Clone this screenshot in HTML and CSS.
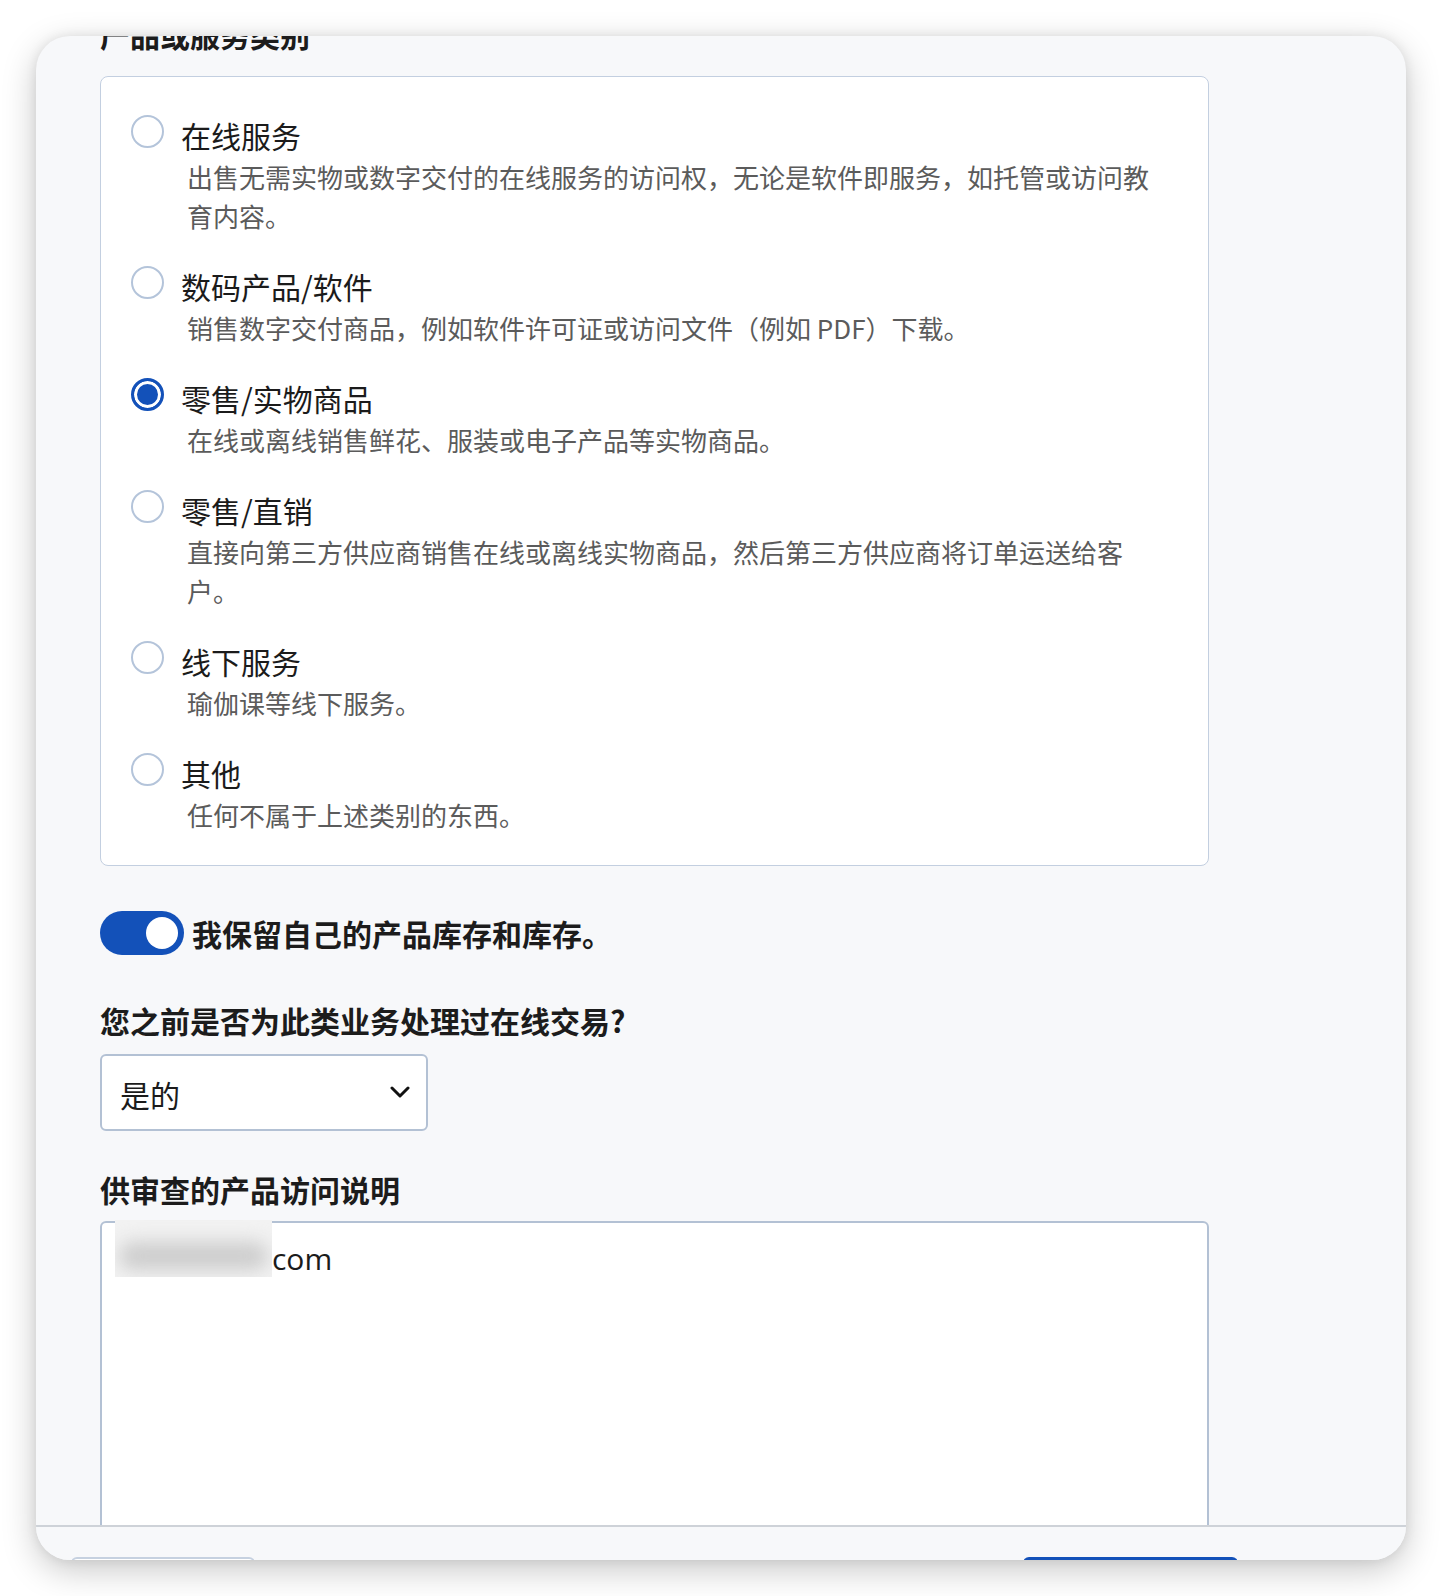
FILE: index.html
```html
<!DOCTYPE html>
<html lang="zh-CN">
<head>
<meta charset="utf-8">
<title>产品或服务类别</title>
<link rel="stylesheet" href="styles.css">
</head>
<body>
<div class="window">
  <div class="scroll">
    <div class="content">
      <div class="section-title">产品或服务类别</div>
      <div class="radio-box">
        <label class="option">
          <input type="radio" name="cat" class="radio">
          <span class="opt-label">在线服务</span>
          <span class="opt-desc">出售无需实物或数字交付的在线服务的访问权，无论是软件即服务，如托管或访问教育内容。</span>
        </label>
        <label class="option">
          <input type="radio" name="cat" class="radio">
          <span class="opt-label">数码产品/软件</span>
          <span class="opt-desc">销售数字交付商品，例如软件许可证或访问文件（例如 PDF）下载。</span>
        </label>
        <label class="option">
          <input type="radio" name="cat" class="radio" checked>
          <span class="opt-label">零售/实物商品</span>
          <span class="opt-desc">在线或离线销售鲜花、服装或电子产品等实物商品。</span>
        </label>
        <label class="option">
          <input type="radio" name="cat" class="radio">
          <span class="opt-label">零售/直销</span>
          <span class="opt-desc">直接向第三方供应商销售在线或离线实物商品，然后第三方供应商将订单运送给客户。</span>
        </label>
        <label class="option">
          <input type="radio" name="cat" class="radio">
          <span class="opt-label">线下服务</span>
          <span class="opt-desc">瑜伽课等线下服务。</span>
        </label>
        <label class="option">
          <input type="radio" name="cat" class="radio">
          <span class="opt-label">其他</span>
          <span class="opt-desc">任何不属于上述类别的东西。</span>
        </label>
      </div>

      <div class="toggle-row">
        <span class="toggle"><span class="knob"></span></span>
        <span class="toggle-label">我保留自己的产品库存和库存。</span>
      </div>

      <div class="field-label q-label">您之前是否为此类业务处理过在线交易?</div>
      <div class="select">
        <span class="select-text">是的</span>
        <svg class="chevron" width="20" height="12" viewBox="0 0 20 12" aria-hidden="true">
          <path d="M2 2 L10 10 L18 2" fill="none" stroke="#111" stroke-width="3" stroke-linecap="round" stroke-linejoin="round"/>
        </svg>
      </div>

      <div class="field-label ta-label">供审查的产品访问说明</div>
      <div class="textarea">
        <span class="redact"><span class="redact-bar"></span></span><span class="ta-text">com</span>
      </div>
    </div>
  </div>
  <div class="footer">
    <span class="btn btn-secondary"></span>
    <span class="btn btn-primary"></span>
  </div>
</div>
</body>
</html>
```

FILE: styles.css
```css
* { box-sizing: border-box; }

html, body {
  margin: 0;
  padding: 0;
  background: #ffffff;
}

body {
  padding: 36px;
  font-family: "Noto Sans CJK SC", "Noto Sans", sans-serif;
  color: #1b1b1b;
}

.window {
  width: 1370px;
  height: 1524px;
  background: #f7f8fa;
  border-radius: 34px;
  overflow: hidden;
  display: flex;
  flex-direction: column;
  box-shadow: 0 10px 34px rgba(0, 0, 0, 0.22), 0 0 12px rgba(0, 0, 0, 0.08);
}

.scroll {
  flex: 1;
  overflow: hidden;
}

.content {
  width: 1109px;
  margin-left: 64px;
  margin-top: -22px;
}

.section-title {
  font-size: 30px;
  line-height: 40px;
  font-weight: 700;
  color: #1c1c1c;
  margin-bottom: 22px;
}

.radio-box {
  background: #ffffff;
  border: 1px solid #c3cfe0;
  border-radius: 8px;
  padding: 38px 46px 31px 30px;
  display: flex;
  flex-direction: column;
  gap: 31px;
}

.option {
  display: grid;
  grid-template-columns: 33px 1fr;
  column-gap: 17px;
  cursor: pointer;
}

.radio {
  appearance: none;
  -webkit-appearance: none;
  margin: 0;
  width: 33px;
  height: 33px;
  border-radius: 50%;
  border: 2px solid #b4c4da;
  background: #ffffff;
  grid-row: 1 / span 2;
  align-self: start;
}

.radio:checked {
  border: 3px solid #1351b9;
  background: #1351b9;
  box-shadow: inset 0 0 0 3px #ffffff;
}

.opt-label {
  grid-column: 2;
  font-size: 30px;
  line-height: 40px;
  color: #1b1b1b;
}

.opt-desc {
  grid-column: 2;
  margin-top: 2px;
  padding-left: 6px;
  font-size: 26px;
  line-height: 39px;
  color: #5b5b5b;
}

.toggle-row {
  margin-top: 45px;
  display: flex;
  align-items: center;
  gap: 8px;
}

.toggle {
  width: 84px;
  height: 44px;
  border-radius: 22px;
  background: #1351b9;
  display: flex;
  align-items: center;
  justify-content: flex-end;
  padding-right: 6px;
}

.knob {
  width: 32px;
  height: 32px;
  border-radius: 50%;
  background: #ffffff;
}

.toggle-label {
  font-size: 30px;
  line-height: 40px;
  font-weight: 700;
  color: #1c1c1c;
}

.field-label {
  font-size: 30px;
  line-height: 40px;
  font-weight: 700;
  color: #1c1c1c;
}

.q-label {
  margin-top: 45px;
}

.select {
  margin-top: 14px;
  width: 328px;
  height: 77px;
  background: #ffffff;
  border: 2px solid #b3c1d4;
  border-radius: 6px;
  display: flex;
  align-items: center;
  justify-content: space-between;
  padding: 0 16px 0 18px;
}

.select-text {
  font-size: 30px;
  line-height: 40px;
  color: #1b1b1b;
  margin-top: 3px;
}

.chevron {
  margin-top: -2px;
}

.ta-label {
  margin-top: 38px;
}

.textarea {
  margin-top: 12px;
  height: 400px;
  background: #ffffff;
  border: 2px solid #b3c1d4;
  border-radius: 6px;
  padding: 16px 14px 0 13px;
  font-family: "Open Sans", "Noto Sans", sans-serif;
  font-size: 30px;
  line-height: 40px;
  color: #1b1b1b;
}

.redact {
  display: inline-block;
  vertical-align: top;
  width: 157px;
  height: 57px;
  margin-top: -19px;
  background: #f2f2f2;
  overflow: hidden;
  padding: 22px 4px 0 4px;
}

.redact-bar {
  display: block;
  height: 28px;
  background: #cdcdcd;
  border-radius: 14px;
  filter: blur(9px);
}

.ta-text {
  vertical-align: top;
}

.footer {
  flex: none;
  height: 35px;
  border-top: 2px solid #ced2d8;
  background: #f7f8fa;
  display: flex;
  padding: 30px 0 0 35px;
  overflow: hidden;
}

.btn {
  display: block;
  height: 60px;
  border-radius: 6px;
}

.btn-secondary {
  width: 184px;
  border: 2px solid #c6d1e0;
  background: #ffffff;
}

.btn-primary {
  width: 215px;
  margin-left: auto;
  margin-right: 168px;
  background: #1351b9;
}
```
